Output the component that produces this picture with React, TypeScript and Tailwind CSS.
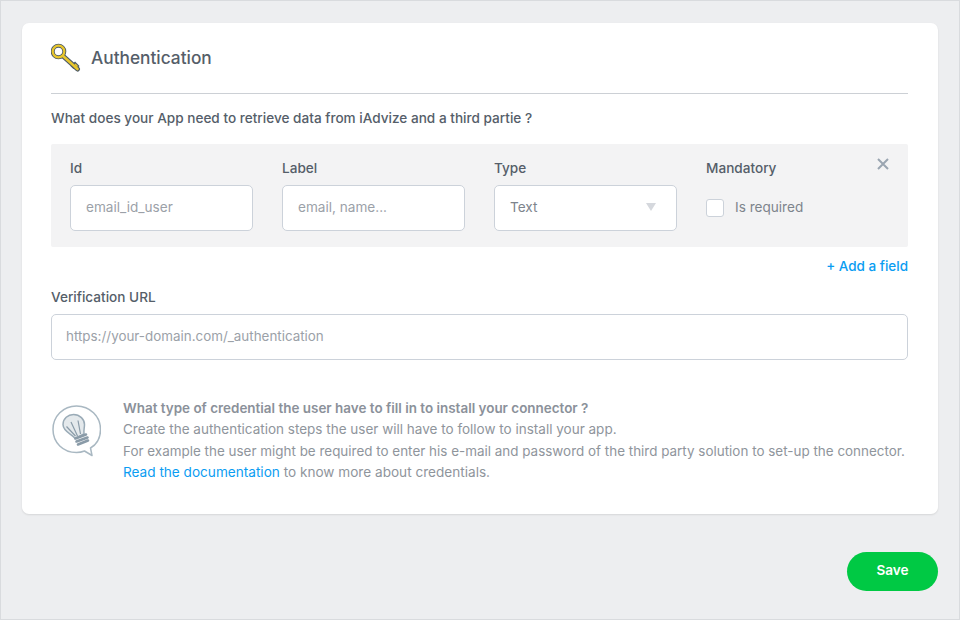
import React from 'react';

const font = "font-['Inter','Noto_Sans',sans-serif]";

const KeyIcon = () => (
  <svg width="30" height="30" viewBox="0 0 30 30" fill="none">
    <path d="M12 13 L26.500 26" stroke="#4c5a68" strokeWidth="5" strokeLinecap="round" />
    <path d="M23 19.500 L27.500 24 M20.500 22 L23.500 25" stroke="#4c5a68" strokeWidth="3" />
    <circle cx="7.500" cy="8.500" r="5.800" stroke="#4c5a68" strokeWidth="4" />
    <circle cx="7.500" cy="8.500" r="5.800" stroke="#e8c62c" strokeWidth="2.200" />
    <path d="M12 13 L26.500 26" stroke="#e8c62c" strokeWidth="2.600" strokeLinecap="round" />
    <path d="M24 21 L26.500 23.500" stroke="#e8c62c" strokeWidth="1.500" />
  </svg>
);

const BulbIcon = () => (
  <svg width="50" height="52" viewBox="0 0 50 52" fill="none">
    <path d="M25.500 1C12.200 1 2 11.300 2 24.500S12.200 47.500 25.500 47.500c3 0 5.500-.5 8-1.500l7.500 4.500-1.500-7.500C45.500 39.500 49.500 32.500 49.500 24.500 49.500 11.300 38.800 1 25.500 1Z" fill="#fff" stroke="#a9b8c2" strokeWidth="1.500" strokeLinejoin="round" />
    <path d="M12 19.500C12 13.500 17 9.500 22.500 9.500 29 9.500 33.500 14.500 33.500 19.500c0 3.500-1 5-.5 9.500l-9 4.500C22 29.500 12 27 12 19.500Z" fill="#e4e9ec" stroke="#9aabb7" strokeWidth="1.500" />
    <path d="M20 17 L26.500 31 M27 15.500 L29.500 29 M15.500 21.500 L24.500 31" stroke="#8a9ba8" strokeWidth="1.200" />
    <path d="M24.500 33.500 L35 29.500 M25.500 36.500 L36.500 32.500 M27 39.500 L37 35.500" stroke="#8a9ba8" strokeWidth="2.600" strokeLinecap="round" />
  </svg>
);

const Field = ({ label, placeholder }: { label: string; placeholder: string }) => (
  <div className="w-[183px]">
    <div className="h-[18px] mb-[8px] text-[13.600px] leading-[18px] font-medium text-[#555e69]">{label}</div>
    <div className="h-[46px] px-[15px] pb-[2px] flex items-center bg-white border border-[#ccd2da] rounded-[5px] text-[13.600px] text-[#9ba1a8]">
      {placeholder}
    </div>
  </div>
);

export default function App() {
  return (
    <div className={`${font} w-[960px] h-[620px] bg-[#edeef0] border border-[#d9dbde] px-[21px] pt-[22px] overflow-hidden`}>
      <div className="bg-white rounded-[7px] h-[491px] pl-[29px] pr-[30px] pt-[17px] shadow-[0_1px_2px_rgba(0,0,0,0.1)]">
        <div className="flex items-center h-[36px] gap-[10px]">
          <KeyIcon />
          <h2 className="text-[17.300px] font-medium text-[#555e69]">Authentication</h2>
        </div>
        <div className="h-px mt-[17px] bg-[#ccd0d5]" />
        <p className="mt-[15px] text-[13.600px] leading-[18px] font-medium text-[#555e69]">
          What does your App need to retrieve data from iAdvize and a third partie ?
        </p>
        <div className="relative mt-[17px] h-[103px] bg-[#f3f3f4] rounded-[2px] pl-[19px] pt-[15px] flex gap-[29px]">
          <Field label="Id" placeholder="email_id_user" />
          <Field label="Label" placeholder="email, name..." />
          <div className="w-[183px]">
            <div className="h-[18px] mb-[8px] text-[13.600px] leading-[18px] font-medium text-[#555e69]">Type</div>
            <div className="h-[46px] pl-[15px] pr-[20px] pb-[2px] flex items-center justify-between bg-white border border-[#ccd2da] rounded-[5px] text-[13.600px] text-[#7d848c]">
              Text
              <span className="w-0 h-0 border-x-[5.500px] border-x-transparent border-t-[8px] border-t-[#d5d8dd]" />
            </div>
          </div>
          <div>
            <div className="h-[18px] mb-[8px] text-[13.600px] leading-[18px] font-medium text-[#555e69]">Mandatory</div>
            <div className="h-[46px] flex items-center gap-[11px] text-[13.600px] text-[#7d848c]">
              <span className="w-[18px] h-[18px] bg-white border border-[#ccd2da] rounded-[3px]" />
              <span className="pb-[2px]">Is required</span>
            </div>
          </div>
          <svg className="absolute right-[19px] top-[14px]" width="12" height="12" viewBox="0 0 12 12">
            <path d="M1 1 L11 11 M11 1 L1 11" stroke="#9aa5b1" strokeWidth="2" />
          </svg>
        </div>
        <div className="mt-[10px] h-[18px] text-right text-[13.500px] leading-[18px] font-medium text-[#0a9df2]">+ Add a field</div>
        <div className="mt-[13px] text-[13.600px] leading-[18px] font-medium text-[#555e69]">Verification URL</div>
        <div className="mt-[8px] h-[46px] px-[14px] pb-[1px] flex items-center border border-[#ccd2da] rounded-[5px] text-[13.400px] text-[#9ba1a8]">
          https://your-domain.com/_authentication
        </div>
        <div className="mt-[38px] flex">
          <div className="w-[72px] shrink-0 pt-[7px]">
            <BulbIcon />
          </div>
          <div className="text-[13.450px] leading-[21.300px] text-[#8f959c] whitespace-nowrap">
            <div className="font-semibold text-[#8b919a]">What type of credential the user have to fill in to install your connector ?</div>
            <div className="text-[13.500px]">Create the authentication steps the user will have to follow to install your app.</div>
            <div>For example the user might be required to enter his e-mail and password of the third party solution to set-up the connector.</div>
            <div className="text-[13.600px]"><span className="text-[#0a9df2]">Read the documentation</span> to know more about credentials.</div>
          </div>
        </div>
      </div>
      <div className="flex justify-end mt-[38px]">
        <button className="w-[91px] h-[39px] pb-[2px] rounded-full bg-[#00c944] text-white text-[13.600px] font-semibold">Save</button>
      </div>
    </div>
  );
}
